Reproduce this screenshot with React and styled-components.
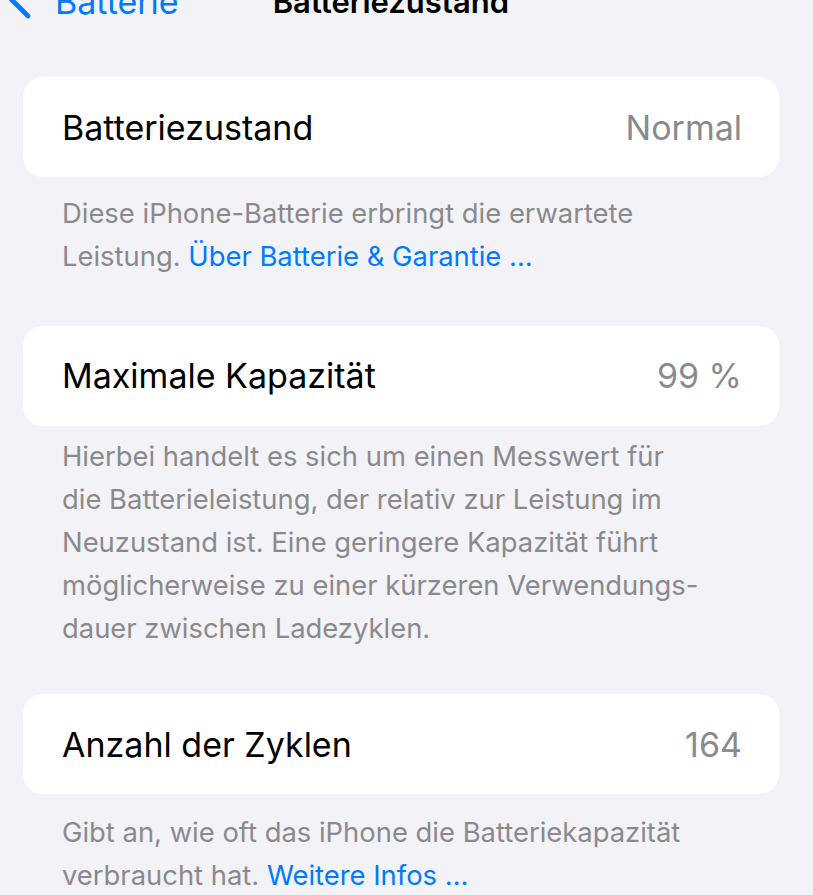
import React from 'react';
import styled, { createGlobalStyle } from 'styled-components';

const GlobalStyle = createGlobalStyle`
  html, body {
    margin: 0;
    padding: 0;
    background: #f2f2f7;
    overflow: hidden;
  }
  body {
    font-family: Inter, "Noto Sans", sans-serif;
    -webkit-font-smoothing: antialiased;
  }
`;

const Page = styled.div`
  width: 813px;
  height: 895px;
  overflow: hidden;
  background: #f2f2f7;
`;

const NavBar = styled.header`
  display: flex;
  align-items: center;
  height: 40px;
  margin-top: -19px;
  padding-left: 8px;
`;

const BackButton = styled.a`
  display: flex;
  align-items: center;
  gap: 21px;
  color: #007aff;
  font-size: 34px;
  text-decoration: none;
`;

const NavTitle = styled.h1`
  margin: 0 0 0 94px;
  font-size: 31px;
  font-weight: 600;
  color: #000;
`;

const Content = styled.main`
  width: 756px;
  padding: 56px 0 0 23px;
`;

const Section = styled.section`
  margin-bottom: ${(p) => p.$gap}px;
`;

const Card = styled.div`
  display: flex;
  align-items: center;
  justify-content: space-between;
  height: 100px;
  padding: 0 37px 0 39px;
  background: #fff;
  border-radius: 20px;
  box-sizing: border-box;
`;

const Label = styled.span`
  font-size: 34px;
  color: #000;
`;

const Value = styled.span`
  font-size: 34px;
  color: #8a8a8e;
`;

const Footer = styled.p`
  margin: ${(p) => p.$top}px 0 0;
  padding-left: 39px;
  font-size: 27.4px;
  line-height: 43px;
  color: #8a8a8e;
`;

const Link = styled.a`
  color: #007aff;
  text-decoration: none;
`;

const Chevron = () => (
  <svg width="26" height="40" viewBox="0 0 26 40">
    <polyline
      points="20,1 3,18 20,35"
      fill="none"
      stroke="#007aff"
      strokeWidth="4.6"
      strokeLinecap="round"
      strokeLinejoin="round"
    />
  </svg>
);

const App = () => {
  return (
    <Page>
      <GlobalStyle />
      <NavBar>
        <BackButton href="#">
          <Chevron />
          Batterie
        </BackButton>
        <NavTitle>Batteriezustand</NavTitle>
      </NavBar>
      <Content>
        <Section $gap={48}>
          <Card>
            <Label>Batteriezustand</Label>
            <Value>Normal</Value>
          </Card>
          <Footer $top={14.5}>
            Diese iPhone-Batterie erbringt die erwartete
            <br />
            Leistung. <Link href="#">Über Batterie &amp; Garantie …</Link>
          </Footer>
        </Section>
        <Section $gap={44}>
          <Card>
            <Label>Maximale Kapazität</Label>
            <Value>99 %</Value>
          </Card>
          <Footer $top={9.5}>
            Hierbei handelt es sich um einen Messwert für
            <br />
            die Batterieleistung, der relativ zur Leistung im
            <br />
            Neuzustand ist. Eine geringere Kapazität führt
            <br />
            möglicherweise zu einer kürzeren Verwendungs-
            <br />
            dauer zwischen Ladezyklen.
          </Footer>
        </Section>
        <Section $gap={0}>
          <Card>
            <Label>Anzahl der Zyklen</Label>
            <Value>164</Value>
          </Card>
          <Footer $top={17}>
            Gibt an, wie oft das iPhone die Batteriekapazität
            <br />
            verbraucht hat. <Link href="#">Weitere Infos …</Link>
          </Footer>
        </Section>
      </Content>
    </Page>
  );
};

export default App;
